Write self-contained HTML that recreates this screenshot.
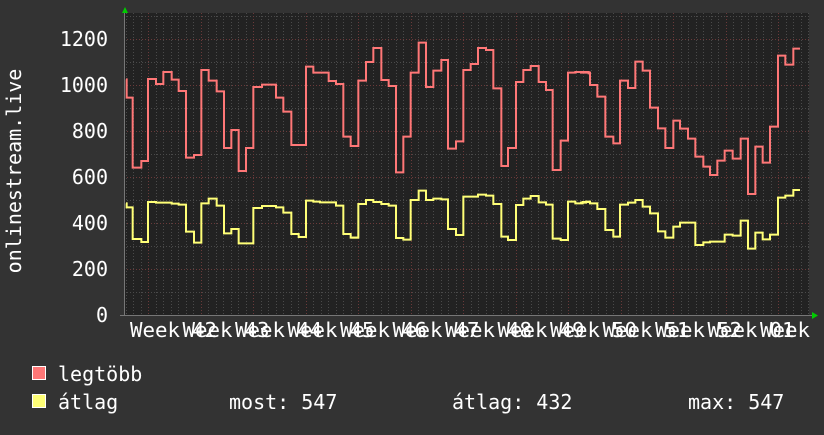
<!DOCTYPE html>
<html><head><meta charset="utf-8"><style>
html,body{margin:0;padding:0;background:#333;}
body{width:824px;height:430px;overflow:hidden;position:relative;}
text{font-family:"DejaVu Sans Mono","Liberation Mono",monospace;fill:#fff;}
</style></head><body>
<svg width="824" height="430" xmlns="http://www.w3.org/2000/svg">
<rect width="824" height="430" fill="#333"/>
<rect x="124" y="13" width="685" height="303" fill="#222"/>
<g stroke="#4a4a4a" stroke-width="1" stroke-dasharray="1,2">
<line x1="124" x2="809" y1="16.5" y2="16.5"/><line x1="124" x2="809" y1="62.5" y2="62.5"/><line x1="124" x2="809" y1="108.5" y2="108.5"/><line x1="124" x2="809" y1="154.5" y2="154.5"/><line x1="124" x2="809" y1="200.5" y2="200.5"/><line x1="124" x2="809" y1="246.5" y2="246.5"/><line x1="124" x2="809" y1="292.5" y2="292.5"/>
</g>
<g id="vg" stroke="#4a4a4a" stroke-width="1" stroke-dasharray="1,2"></g>
<g stroke="#6a3a3a" stroke-width="1" stroke-dasharray="1,2">
<line x1="124" x2="809" y1="39.5" y2="39.5"/><line x1="124" x2="809" y1="85.5" y2="85.5"/><line x1="124" x2="809" y1="131.5" y2="131.5"/><line x1="124" x2="809" y1="177.5" y2="177.5"/><line x1="124" x2="809" y1="223.5" y2="223.5"/><line x1="124" x2="809" y1="269.5" y2="269.5"/>
</g>
<g id="vm" stroke="#6a3a3a" stroke-width="1" stroke-dasharray="1,2"></g>
<line x1="124.5" y1="13" x2="124.5" y2="316" stroke="#777"/>
<line x1="120" y1="315.5" x2="812" y2="315.5" stroke="#777"/>
<polygon points="122,13 128,13 125,7" fill="#0c0"/>
<polygon points="812,312 812,319 818,315.5" fill="#0c0"/>
<g fill="none" stroke-width="2" stroke-linejoin="miter">
<g stroke="#ff7777">
<path transform="translate(120,30) scale(0.33333)" vector-effect="non-scaling-stroke" d="M18 148 H20 V203 H38 V413 H64 V393 H84 V147 H108 V162 H130 V126 H155 V149 H176 V183 H198 V383 H222 V375 H244 V120 H266 V152 H290 V184 H312 V354 H334 V300 H356 V423 H378 V354 H400 V171 H426 V164 H468 V203 H490 V245 H514 V345 H558 V110 H580 V128 H626 V153 H648 V162 H670 V320 H692 V348 H716"/>
<path transform="translate(350,30) scale(0.33333)" vector-effect="non-scaling-stroke" d="M6 348 H25 V152 H48 V96 H70 V54 H94 V150 H116 V168 H138 V427 H160 V320 H182 V128 H206 V38 H228 V171 H250 V122 H274 V90 H294 V356 H318 V334 H340 V120 H362 V102 H384 V54 H408 V60 H430 V175 H454 V408 H474 V354 H498 V156 H520 V120 H542 V108 H566 V156 H588 V180 H608 V420 H632 V332 H654 V128 H676 V126 H716 V130 H720"/>
<path transform="translate(580,30) scale(0.33333)" vector-effect="non-scaling-stroke" d="M0 128 H30 V165 H52 V200 H76 V320 H100 V340 H120 V152 H144 V174 H166 V95 H188 V122 H210 V233 H234 V295 H256 V354 H280 V272 H300 V296 H324 V326 H346 V380 H370 V410 H390 V435 H412 V392 H434 V362 H458 V386 H482 V326 H504 V492 H526 V350 H548 V398 H570 V290 H594 V77 H616 V104 H640 V56 H660"/>
</g>
<g stroke="#ffff77">
<path transform="translate(120,30) scale(0.33333)" vector-effect="non-scaling-stroke" d="M18 520 H20 V532 H38 V627 H64 V636 H84 V516 H108 V518 H155 V521 H176 V524 H198 V605 H222 V638 H244 V520 H266 V506 H290 V527 H312 V610 H334 V597 H356 V640 H400 V534 H426 V528 H468 V532 H490 V548 H514 V612 H536 V621 H558 V512 H580 V515 H600 V517 H648 V527 H670 V612 H692 V623 H716"/>
<path transform="translate(350,30) scale(0.33333)" vector-effect="non-scaling-stroke" d="M6 623 H25 V522 H48 V510 H70 V516 H94 V522 H116 V527 H138 V624 H160 V629 H182 V510 H206 V482 H228 V510 H250 V506 H274 V508 H294 V597 H318 V615 H340 V500 H384 V494 H408 V497 H430 V522 H454 V620 H474 V630 H498 V525 H520 V506 H542 V498 H566 V517 H588 V524 H608 V626 H632 V630 H654 V515 H676 V520 H698 V516 H720"/>
<path transform="translate(580,30) scale(0.33333)" vector-effect="non-scaling-stroke" d="M0 518 H18 V515 H30 V520 H52 V537 H76 V600 H100 V620 H120 V524 H144 V518 H166 V510 H188 V530 H210 V550 H234 V604 H256 V623 H280 V590 H300 V578 H346 V645 H370 V637 H390 V635 H434 V614 H458 V617 H482 V572 H504 V656 H526 V608 H548 V628 H570 V614 H594 V503 H616 V497 H640 V480 H660"/>
</g>
</g>
<g font-size="20" text-anchor="end">
<text x="108" y="46">1200</text><text x="108" y="92">1000</text><text x="108" y="138">800</text><text x="108" y="184">600</text><text x="108" y="230">400</text><text x="108" y="276">200</text><text x="108" y="322">0</text>
</g>
<text font-size="20" transform="translate(21,171) rotate(-90)" text-anchor="middle">onlinestream.live</text>
<g font-size="20" id="wk"></g>
<rect x="32.5" y="366.5" width="13" height="13" fill="#ff7777" stroke="#fff" stroke-width="1"/>
<rect x="32.5" y="394.5" width="13" height="13" fill="#ffff77" stroke="#fff" stroke-width="1"/>
<g font-size="20">
<text x="58" y="381">legtöbb</text>
<text x="58" y="409">átlag</text>
<text x="229" y="409">most: 547</text>
<text x="452" y="409">átlag: 432</text>
<text x="688" y="409">max: 547</text>
</g>
</svg>
<script>
var ns="http://www.w3.org/2000/svg";
var vg=document.getElementById("vg"),vm=document.getElementById("vm"),wk=document.getElementById("wk");
for(var x=125.8;x<809;x+=7.5){var l=document.createElementNS(ns,"line");var xx=Math.round(x)+0.5;l.setAttribute("x1",xx);l.setAttribute("x2",xx);l.setAttribute("y1",13);l.setAttribute("y2",316);vg.appendChild(l);}
for(var k=0;k<13;k++){var x=148.3+52.5*k;if(x>809)break;var l=document.createElementNS(ns,"line");var xx=Math.round(x)+0.5;l.setAttribute("x1",xx);l.setAttribute("x2",xx);l.setAttribute("y1",13);l.setAttribute("y2",316);vm.appendChild(l);}
var nums=["42","43","44","45","46","47","48","49","50","51","52","01"];
function tx(x,s,w){var t=document.createElementNS(ns,"text");t.setAttribute("x",x);t.setAttribute("y",337);t.setAttribute("textLength",w);t.setAttribute("lengthAdjust","spacingAndGlyphs");t.textContent=s;wk.appendChild(t);}
for(var i=0;i<13;i++){tx(130+52.5*i,"Week",50);if(i<12)tx(192+52.5*i,nums[i],25);}
</script>
</body></html>
